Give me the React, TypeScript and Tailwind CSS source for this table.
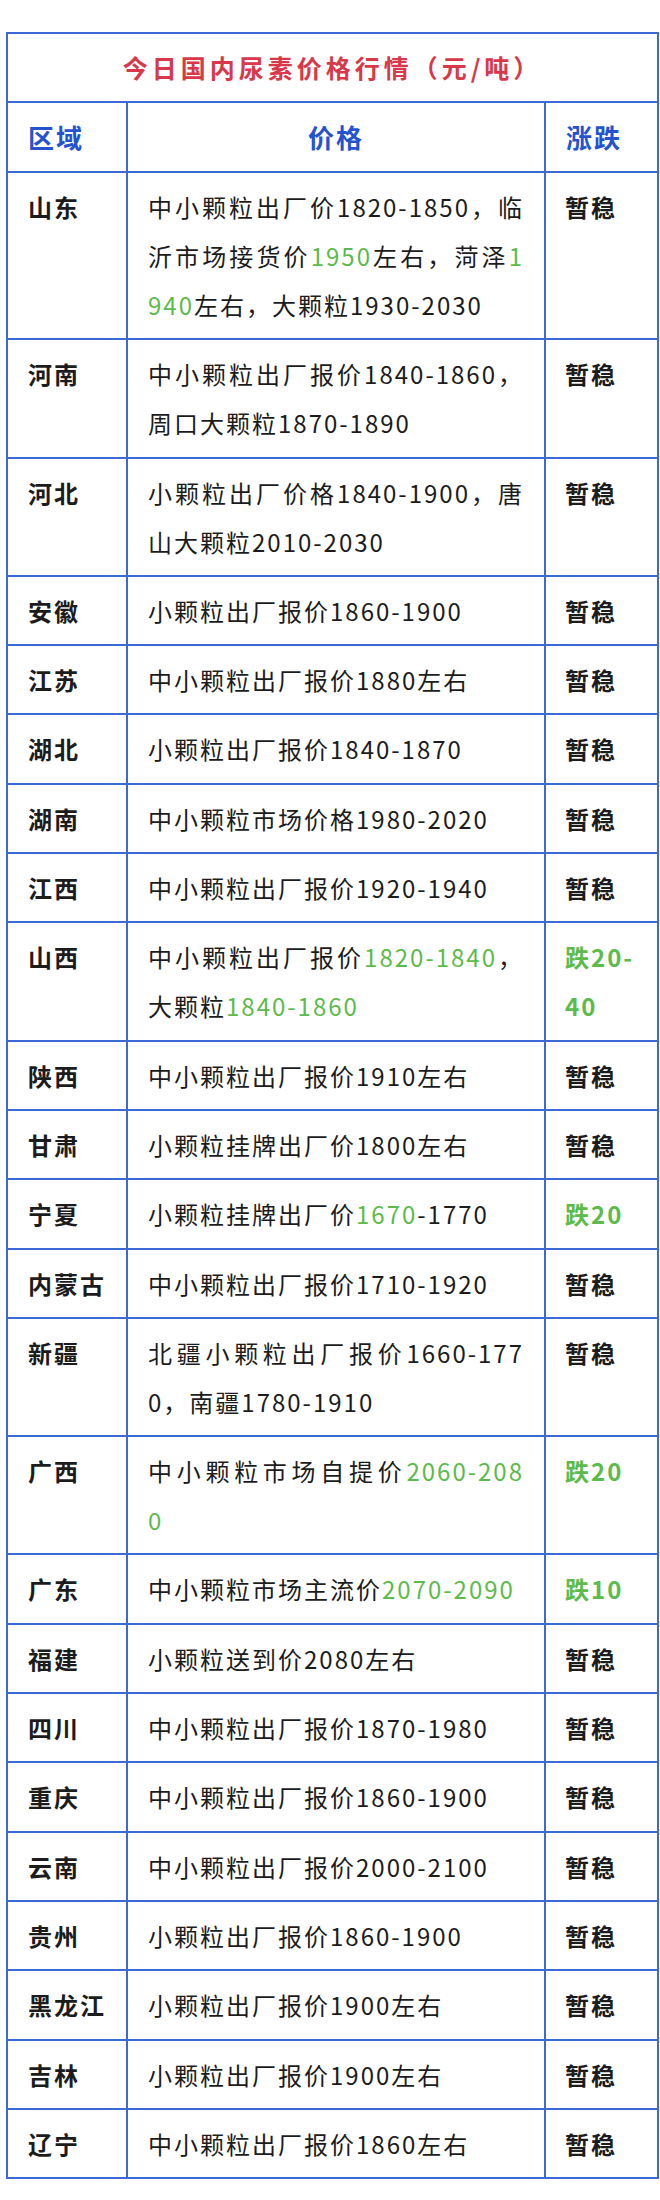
type Row = {
  region: string;
  lines: string[];
  change: string;
  down?: boolean;
};

// {...} marks the green parts of a line
const ROWS: Row[] = [
  {
    region: "山东",
    lines: ["中小颗粒出厂价1820-1850，临", "沂市场接货价{1950}左右，菏泽{1}", "{940}左右，大颗粒1930-2030"],
    change: "暂稳",
  },
  { region: "河南", lines: ["中小颗粒出厂报价1840-1860，", "周口大颗粒1870-1890"], change: "暂稳" },
  { region: "河北", lines: ["小颗粒出厂价格1840-1900，唐", "山大颗粒2010-2030"], change: "暂稳" },
  { region: "安徽", lines: ["小颗粒出厂报价1860-1900"], change: "暂稳" },
  { region: "江苏", lines: ["中小颗粒出厂报价1880左右"], change: "暂稳" },
  { region: "湖北", lines: ["小颗粒出厂报价1840-1870"], change: "暂稳" },
  { region: "湖南", lines: ["中小颗粒市场价格1980-2020"], change: "暂稳" },
  { region: "江西", lines: ["中小颗粒出厂报价1920-1940"], change: "暂稳" },
  { region: "山西", lines: ["中小颗粒出厂报价{1820-1840}，", "大颗粒{1840-1860}"], change: "跌20-40", down: true },
  { region: "陕西", lines: ["中小颗粒出厂报价1910左右"], change: "暂稳" },
  { region: "甘肃", lines: ["小颗粒挂牌出厂价1800左右"], change: "暂稳" },
  { region: "宁夏", lines: ["小颗粒挂牌出厂价{1670}-1770"], change: "跌20", down: true },
  { region: "内蒙古", lines: ["中小颗粒出厂报价1710-1920"], change: "暂稳" },
  { region: "新疆", lines: ["北疆小颗粒出厂报价1660-177", "0，南疆1780-1910"], change: "暂稳" },
  { region: "广西", lines: ["中小颗粒市场自提价{2060-208}", "{0}"], change: "跌20", down: true },
  { region: "广东", lines: ["中小颗粒市场主流价{2070-2090}"], change: "跌10", down: true },
  { region: "福建", lines: ["小颗粒送到价2080左右"], change: "暂稳" },
  { region: "四川", lines: ["中小颗粒出厂报价1870-1980"], change: "暂稳" },
  { region: "重庆", lines: ["中小颗粒出厂报价1860-1900"], change: "暂稳" },
  { region: "云南", lines: ["中小颗粒出厂报价2000-2100"], change: "暂稳" },
  { region: "贵州", lines: ["小颗粒出厂报价1860-1900"], change: "暂稳" },
  { region: "黑龙江", lines: ["小颗粒出厂报价1900左右"], change: "暂稳" },
  { region: "吉林", lines: ["小颗粒出厂报价1900左右"], change: "暂稳" },
  { region: "辽宁", lines: ["中小颗粒出厂报价1860左右"], change: "暂稳" },
];

const cell = "border-2 border-[#3b6ad6] align-top";

function PriceLine({ text, last }: { text: string; last: boolean }) {
  const parts = text.split(/(\{[^}]*\})/).filter(Boolean);
  return (
    <div className={last ? "text-left" : "text-justify [text-align-last:justify]"}>
      {parts.map((p, i) =>
        p.startsWith("{") ? (
          <span key={i} className="text-[#5cbb4b]">
            {p.slice(1, -1)}
          </span>
        ) : (
          <span key={i}>{p}</span>
        )
      )}
    </div>
  );
}

export default function App() {
  return (
    <div className="min-h-[2200px] bg-white pt-[32px] pl-[6px] font-['Noto_Sans_CJK_SC','Noto_Sans',sans-serif] text-[#1c1c1c]">
      <table className="w-[651px] table-fixed border-collapse">
        <colgroup>
          <col className="w-[120px]" />
          <col className="w-[418px]" />
          <col className="w-[113px]" />
        </colgroup>
        <tbody>
          <tr>
            <td
              colSpan={3}
              className={`${cell} py-[9px] text-center text-[25px] font-bold leading-[49px] tracking-[4px] text-[#d8384a]`}
            >
              今日国内尿素价格行情（元/吨）
            </td>
          </tr>
          <tr className="text-[26px] font-bold leading-[48px] tracking-[2px] text-[#2553cf]">
            <td className={`${cell} px-[20px] py-[10px]`}>区域</td>
            <td className={`${cell} px-[20px] py-[10px] text-center`}>价格</td>
            <td className={`${cell} px-[20px] py-[10px]`}>涨跌</td>
          </tr>
          {ROWS.map((row) => (
            <tr key={row.region} className="text-[24px] leading-[49px] tracking-[2px]">
              <td className={`${cell} pt-[9px] pb-[9.3px] pl-[20px] pr-[4px] font-bold`}>{row.region}</td>
              <td className={`${cell} px-[20px] pt-[9px] pb-[9.3px]`}>
                {row.lines.map((line, i) => (
                  <PriceLine key={i} text={line} last={i === row.lines.length - 1} />
                ))}
              </td>
              <td className={`${cell} pt-[9px] pb-[9.3px] pl-[19px] pr-[8px] font-bold ${row.down ? "text-[#5cbb4b]" : ""}`}>
                {row.change}
              </td>
            </tr>
          ))}
        </tbody>
      </table>
    </div>
  );
}
